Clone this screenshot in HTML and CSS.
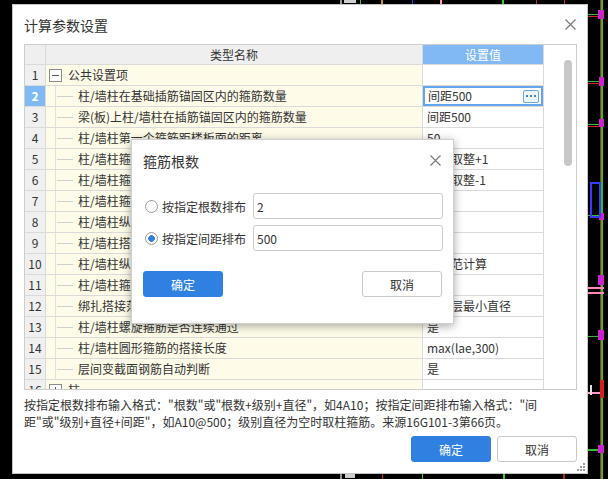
FILE: index.html
```html
<!DOCTYPE html>
<html lang="zh-CN">
<head>
<meta charset="utf-8">
<title>计算参数设置</title>
<link rel="stylesheet" href="styles.css">
</head>
<body>
<svg class="cad" width="608" height="479" viewBox="0 0 608 479">
  <rect x="340" y="0" width="2" height="4" fill="#9a9a9a"/>
  <rect x="344" y="0" width="12" height="3" fill="#cfcfcf"/>
  <rect x="360" y="0" width="1" height="4" fill="#33cc33"/>
  <rect x="381" y="0" width="2" height="4" fill="#d08a20"/>
  <rect x="412" y="0" width="1" height="4" fill="#3a3aff"/>
  <rect x="440" y="0" width="2" height="4" fill="#ff99cc"/>
  <rect x="502" y="0" width="2" height="4" fill="#33cc33"/>
  <rect x="536" y="0" width="1" height="4" fill="#cc2222"/>
  <rect x="564" y="0" width="1" height="4" fill="#cc2222"/>
  <rect x="600" y="0" width="1" height="479" fill="#b02020"/>
  <rect x="601" y="0" width="2" height="479" fill="#33bb33"/>
  <g fill="#33bb33">
    <rect x="588" y="14" width="12" height="1"/>
    <rect x="588" y="81" width="12" height="1"/>
    <rect x="588" y="124" width="12" height="1"/>
    <rect x="588" y="215" width="12" height="1"/>
    <rect x="588" y="336" width="12" height="1"/>
    <rect x="588" y="449" width="10" height="2"/>
  </g>
  <g fill="#d02020">
    <rect x="588" y="16" width="12" height="1"/>
    <rect x="588" y="83" width="12" height="1"/>
    <rect x="588" y="126" width="12" height="1"/>
    <rect x="600" y="380" width="4" height="18"/>
  </g>
  <g fill="#cc22cc">
    <rect x="598" y="10" width="6" height="9"/>
    <rect x="599" y="77" width="5" height="9"/>
    <rect x="599" y="119" width="5" height="8"/>
    <rect x="599" y="213" width="5" height="7"/>
    <rect x="598" y="275" width="6" height="10"/>
    <rect x="598" y="330" width="6" height="10"/>
    <rect x="598" y="445" width="6" height="8"/>
  </g>
  <rect x="591" y="183" width="9" height="34" fill="none" stroke="#3a3aff" stroke-width="2"/>
  <rect x="588" y="287" width="16" height="2" fill="#ff88bb"/>
  <rect x="588" y="292" width="16" height="2" fill="#ff88bb"/>
  <rect x="588" y="392" width="12" height="2" fill="#ff99cc"/>
  <rect x="590" y="385" width="2" height="10" fill="#e0e0e0"/>
  <rect x="340" y="474" width="2" height="5" fill="#9a9a9a"/>
  <rect x="345" y="474" width="10" height="4" fill="#cfcfcf"/>
  <rect x="382" y="474" width="1" height="5" fill="#cc2222"/>
  <rect x="422" y="474" width="1" height="5" fill="#33cc33"/>
  <rect x="503" y="474" width="2" height="5" fill="#33cc33"/>
  <rect x="563" y="474" width="2" height="5" fill="#b02020"/>
</svg>

<div class="dialog">
  <div class="titlebar">
    <span class="title">计算参数设置</span>
    <svg class="close" width="11" height="11" viewBox="0 0 11 11"><path d="M0.5 0.5 L10.5 10.5 M10.5 0.5 L0.5 10.5" stroke="#7a7a7a" stroke-width="1.2"/></svg>
  </div>

  <div class="grid-wrap">
    <div class="grid">
      <div class="row head">
        <div class="c num"></div>
        <div class="c name">类型名称</div>
        <div class="c val">设置值</div>
      </div>
      <div class="row">
        <div class="c num">1</div>
        <div class="c name"><i class="box minus"></i>公共设置项</div>
        <div class="c val"></div>
      </div>
      <div class="row">
        <div class="c num sel">2</div>
        <div class="c name"><i class="tree"></i>柱/墙柱在基础插筋锚固区内的箍筋数量</div>
        <div class="c val edit">间距500<span class="more"><b></b><b></b><b></b></span></div>
      </div>
      <div class="row">
        <div class="c num">3</div>
        <div class="c name"><i class="tree"></i>梁(板)上柱/墙柱在插筋锚固区内的箍筋数量</div>
        <div class="c val">间距500</div>
      </div>
      <div class="row">
        <div class="c num">4</div>
        <div class="c name"><i class="tree"></i>柱/墙柱第一个箍筋距楼板面的距离</div>
        <div class="c val">50</div>
      </div>
      <div class="row">
        <div class="c num">5</div>
        <div class="c name"><i class="tree"></i>柱/墙柱箍筋加密区根数计算方式</div>
        <div class="c val">向上取整+1</div>
      </div>
      <div class="row">
        <div class="c num">6</div>
        <div class="c name"><i class="tree"></i>柱/墙柱箍筋非加密区根数计算方式</div>
        <div class="c val">向上取整-1</div>
      </div>
      <div class="row">
        <div class="c num">7</div>
        <div class="c name"><i class="tree"></i>柱/墙柱箍筋弯勾角度</div>
        <div class="c val">135°</div>
      </div>
      <div class="row">
        <div class="c num">8</div>
        <div class="c name"><i class="tree"></i>柱/墙柱纵筋搭接接头错开百分率</div>
        <div class="c val">50%</div>
      </div>
      <div class="row">
        <div class="c num">9</div>
        <div class="c name"><i class="tree"></i>柱/墙柱搭接部位箍筋加密</div>
        <div class="c val">是</div>
      </div>
      <div class="row">
        <div class="c num">10</div>
        <div class="c name"><i class="tree"></i>柱/墙柱纵筋错开距离设置</div>
        <div class="c val">按规范计算</div>
      </div>
      <div class="row">
        <div class="c num">11</div>
        <div class="c name"><i class="tree"></i>柱/墙柱箍筋加密范围</div>
        <div class="c val">是</div>
      </div>
      <div class="row">
        <div class="c num">12</div>
        <div class="c name"><i class="tree"></i>绑扎搭接范围内的箍筋间距min(5d,100)中，d取值</div>
        <div class="c val">上下层最小直径</div>
      </div>
      <div class="row">
        <div class="c num">13</div>
        <div class="c name"><i class="tree"></i>柱/墙柱螺旋箍筋是否连续通过</div>
        <div class="c val">是</div>
      </div>
      <div class="row">
        <div class="c num">14</div>
        <div class="c name"><i class="tree"></i>柱/墙柱圆形箍筋的搭接长度</div>
        <div class="c val">max(lae,300)</div>
      </div>
      <div class="row">
        <div class="c num">15</div>
        <div class="c name"><i class="tree"></i>层间变截面钢筋自动判断</div>
        <div class="c val">是</div>
      </div>
      <div class="row">
        <div class="c num">16</div>
        <div class="c name"><i class="box plus"></i>柱</div>
        <div class="c val"></div>
      </div>
    </div>
    <div class="vscroll"><div class="thumb"></div></div>
  </div>

  <p class="hint">按指定根数排布输入格式："根数"或"根数+级别+直径"，如4A10；按指定间距排布输入格式："间<br>距"或"级别+直径+间距"，如A10@500；级别直径为空时取柱箍筋。来源16G101-3第66页。</p>

  <div class="actions">
    <button class="btn primary">确定</button>
    <button class="btn">取消</button>
  </div>

  <svg class="grip" width="9" height="9" viewBox="0 0 9 9"><g fill="#9c9c9c"><rect x="6" y="0" width="2" height="2"/><rect x="3" y="3" width="2" height="2"/><rect x="6" y="3" width="2" height="2"/><rect x="0" y="6" width="2" height="2"/><rect x="3" y="6" width="2" height="2"/><rect x="6" y="6" width="2" height="2"/></g></svg>
</div>

<div class="modal">
  <div class="m-title">
    <span>箍筋根数</span>
    <svg class="close" width="11" height="11" viewBox="0 0 11 11"><path d="M0.5 0.5 L10.5 10.5 M10.5 0.5 L0.5 10.5" stroke="#7a7a7a" stroke-width="1.2"/></svg>
  </div>
  <div class="m-body">
    <label class="opt"><span class="radio"></span><span class="lbl">按指定根数排布</span><input class="field" type="text" value="2"></label>
    <label class="opt"><span class="radio on"></span><span class="lbl">按指定间距排布</span><input class="field" type="text" value="500"></label>
  </div>
  <div class="m-actions">
    <button class="btn primary">确定</button>
    <button class="btn">取消</button>
  </div>
</div>
</body>
</html>
```

FILE: styles.css
```css
html, body {
  margin: 0;
  padding: 0;
}
body {
  width: 608px;
  height: 479px;
  background: #000;
  position: relative;
  overflow: hidden;
  font-family: "Noto Sans CJK SC", "Noto Sans", sans-serif;
  font-size: 12px;
  color: #333;
}
.cad {
  position: absolute;
  left: 0;
  top: 0;
}

/* main dialog */
.dialog {
  position: absolute;
  left: 12px;
  top: 4px;
  width: 576px;
  height: 470px;
  box-sizing: border-box;
  background: #fff;
  border: 1px solid #c4c4c4;
  display: flex;
  flex-direction: column;
}
.titlebar {
  height: 39px;
  flex: none;
  display: flex;
  align-items: center;
  justify-content: space-between;
  padding: 0 11px 0 11px;
}
.title {
  font-size: 14px;
  color: #333;
}
.close {
  display: block;
}

/* grid */
.grid-wrap {
  flex: none;
  height: 346px;
  margin: 0 10px 0 11px;
  box-sizing: border-box;
  border: 1px solid #cdcdcd;
  display: flex;
  overflow: hidden;
}
.grid {
  width: 519px;
  flex: none;
  overflow: hidden;
}
.row {
  display: flex;
  height: 21px;
  box-sizing: border-box;
  border-bottom: 1px solid #dadada;
}
.row.head {
  height: 20px;
}
.c {
  box-sizing: border-box;
  border-right: 1px solid #dadada;
  display: flex;
  align-items: center;
  white-space: nowrap;
  overflow: hidden;
  line-height: 16px;
}
.num {
  width: 21px;
  flex: none;
  justify-content: center;
  background: #f0f0f0;
}
.name {
  width: 377px;
  flex: none;
  background: #fefce9;
}
.val {
  width: 121px;
  flex: none;
  padding-left: 4px;
  background: #fff;
}
.head .c {
  justify-content: center;
  background: #efefef;
}
.head .val {
  background: #80b9f4;
  color: #fff;
  padding-left: 0;
}
.num.sel {
  background: #80b9f4;
  color: #fff;
  font-weight: bold;
}
.val.edit {
  box-shadow: inset 0 0 0 2px #62a6ea;
  justify-content: space-between;
  padding-left: 5px;
  padding-right: 4px;
}
.more {
  width: 16px;
  height: 13px;
  box-sizing: border-box;
  border: 1px solid #6aa6e2;
  border-radius: 2px;
  background: #eef5fd;
  display: flex;
  align-items: center;
  justify-content: center;
  gap: 2px;
}
.more b {
  width: 2px;
  height: 2px;
  background: #3f87d6;
}
.tree {
  align-self: stretch;
  flex: none;
  width: 23px;
  margin-left: 9px;
  box-sizing: border-box;
  border-left: 1px solid #e0e0e0;
  background: linear-gradient(#cfcfcf, #cfcfcf) 1px 50% / 16px 1px no-repeat;
}
.box {
  flex: none;
  width: 13px;
  height: 13px;
  box-sizing: border-box;
  margin: 0 6px 0 3px;
  border: 1px solid #8c8c8c;
  background: #fff;
}
.box.minus {
  background: linear-gradient(#555, #555) center / 7px 1px no-repeat, #fff;
}
.box.plus {
  background: linear-gradient(#555, #555) center / 7px 1px no-repeat,
              linear-gradient(#555, #555) center / 1px 7px no-repeat, #fff;
}
.vscroll {
  flex: 1;
  padding: 15px 0 0 20px;
  background: #fff;
}
.thumb {
  width: 8px;
  height: 106px;
  border-radius: 4px;
  background: #c8c8c8;
}

/* hint + actions */
.hint {
  margin: 6px 0 0 11px;
  line-height: 17px;
  font-size: 12px;
  color: #333;
}
.actions {
  display: flex;
  justify-content: flex-end;
  gap: 6px;
  margin: 6px 10px 0 0;
}
.btn {
  width: 80px;
  height: 26px;
  box-sizing: border-box;
  border: 1px solid #c9c9c9;
  border-radius: 3px;
  background: #fff;
  color: #333;
  font-family: inherit;
  font-size: 12px;
  padding: 0;
}
.btn.primary {
  background: #2f80e1;
  border-color: #2f80e1;
  color: #fff;
}
.grip {
  position: absolute;
  right: 1px;
  bottom: 1px;
}

/* modal */
.modal {
  position: absolute;
  left: 131px;
  top: 139px;
  width: 323px;
  height: 185px;
  box-sizing: border-box;
  background: #fff;
  border: 1px solid #cfcfcf;
  box-shadow: 0 2px 9px rgba(0, 0, 0, 0.35);
}
.m-title {
  height: 41px;
  display: flex;
  align-items: center;
  justify-content: space-between;
  padding: 0 12px 0 11px;
  font-size: 14px;
  color: #333;
}
.m-body {
  padding: 12px 10px 0 11px;
  display: flex;
  flex-direction: column;
  gap: 6px;
}
.opt {
  display: flex;
  align-items: center;
  height: 26px;
}
.radio {
  flex: none;
  width: 13px;
  height: 13px;
  box-sizing: border-box;
  border: 1px solid #9a9a9a;
  border-radius: 50%;
  margin: 0 4px 0 2px;
  background: #fff;
}
.radio.on {
  background: radial-gradient(circle, #2f80e1 0 3px, #fff 3.6px);
}
.lbl {
  white-space: nowrap;
}
.field {
  margin-left: auto;
  width: 190px;
  height: 26px;
  box-sizing: border-box;
  border: 1px solid #cdcdcd;
  border-radius: 3px;
  padding: 0 3px;
  font-family: inherit;
  font-size: 12px;
  color: #333;
  outline: none;
}
.m-actions {
  display: flex;
  justify-content: space-between;
  padding: 20px 11px 0 11px;
}
```
